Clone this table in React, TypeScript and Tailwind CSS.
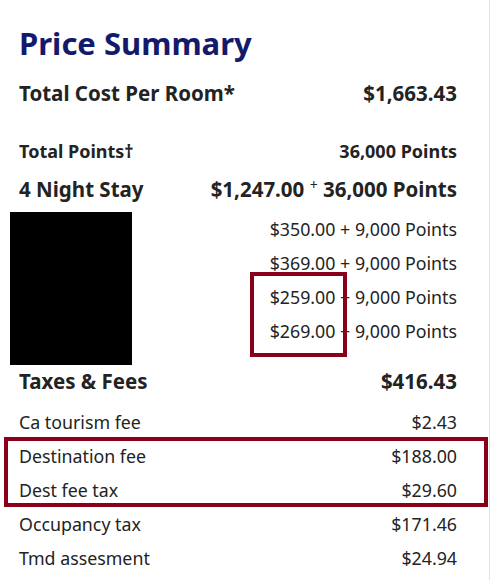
const subRows = [
  { cash: "$350.00", points: "9,000 Points" },
  { cash: "$369.00", points: "9,000 Points" },
  { cash: "$259.00", points: "9,000 Points" },
  { cash: "$269.00", points: "9,000 Points" },
];

const fees = [
  { label: "Ca tourism fee", amount: "$2.43" },
  { label: "Destination fee", amount: "$188.00" },
  { label: "Dest fee tax", amount: "$29.60" },
  { label: "Occupancy tax", amount: "$171.46" },
  { label: "Tmd assesment", amount: "$24.94" },
];

export default function App() {
  return (
    <div className="w-[491px] h-[580px] overflow-hidden bg-white font-['Noto_Sans',sans-serif] text-[#232323]">
      <div className="relative w-[490px] h-full border-r border-[#e1e5eb] pl-[19px] pr-[32px] pt-[23px]">
        <h1 className="h-[40px] leading-[40px] text-[31px] font-bold text-[#141a6b]">Price Summary</h1>

        <div className="mt-[16px] flex justify-between h-[28px] leading-[28px] text-[20.5px] font-bold">
          <span>Total Cost Per Room*</span>
          <span>$1,663.43</span>
        </div>

        <div className="mt-[30px] flex justify-between h-[28px] leading-[28px] text-[18px] font-bold">
          <span>Total Points†</span>
          <span>36,000 Points</span>
        </div>

        <div className="mt-[10px] flex justify-between h-[28px] leading-[28px] text-[20.5px] font-bold">
          <span>4 Night Stay</span>
          <span>
            $1,247.00 <sup className="text-[14px] font-normal">+</sup> 36,000 Points
          </span>
        </div>

        {/* nightly breakdown */}
        <div className="mt-[9px] flex flex-col">
          {subRows.map((r, i) => (
            <div key={i} className="h-[34px] leading-[34px] text-[17.8px] text-right">
              {r.cash} + {r.points}
            </div>
          ))}
        </div>

        <div className="mt-[19px] flex justify-between h-[28px] leading-[28px] text-[20.5px] font-bold">
          <span>Taxes &amp; Fees</span>
          <span>$416.43</span>
        </div>

        <div className="mt-[10px] flex flex-col">
          {fees.map((f) => (
            <div key={f.label} className="flex justify-between h-[34px] leading-[34px] text-[17.8px]">
              <span>{f.label}</span>
              <span>{f.amount}</span>
            </div>
          ))}
        </div>

        {/* redaction + highlight overlays */}
        <div className="absolute left-[10px] top-[212px] w-[122px] h-[153px] bg-black" />
        <div className="absolute left-[250px] top-[272px] w-[97px] h-[85px] border-[4px] border-[#8a0018]" />
        <div className="absolute left-[4px] top-[437px] w-[484px] h-[70px] border-[4px] border-[#8a0018]" />
      </div>
    </div>
  );
}
